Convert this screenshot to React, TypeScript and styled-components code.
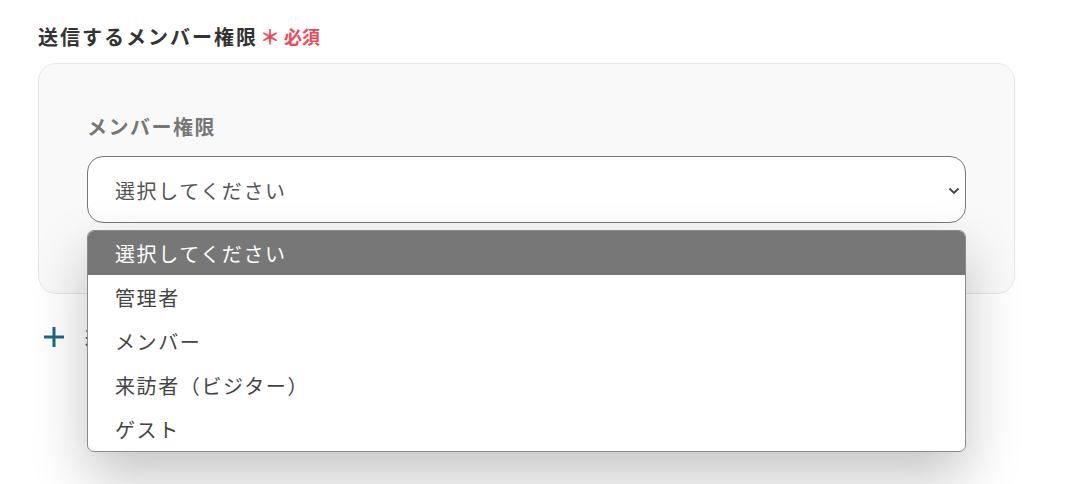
import styled, { createGlobalStyle } from "styled-components";

const GlobalStyle = createGlobalStyle`
    html, body {
        margin: 0;
        padding: 0;
        background: #ffffff;
        font-family: "Noto Sans CJK JP", "Noto Sans", sans-serif;
    }
`;

const options = ["選択してください", "管理者", "メンバー", "来訪者（ビジター）", "ゲスト"];

const App = () => {
    return (
        <Page>
            <GlobalStyle />
            <Title>
                送信するメンバー権限
                <Required>
                    <Asterisk>＊</Asterisk>必須
                </Required>
            </Title>
            <Card>
                <FieldLabel>メンバー権限</FieldLabel>
                <SelectWrap>
                    <SelectBox>
                        <span>選択してください</span>
                        <svg width="12" height="8" viewBox="0 0 12 8">
                            <path d="M1.5 1.5 L6 6 L10.5 1.5" fill="none" stroke="#444" strokeWidth="1.8" />
                        </svg>
                    </SelectBox>
                    <OptionList>
                        {options.map((option, index) => (
                            <OptionItem key={option} $active={index === 0}>
                                {option}
                            </OptionItem>
                        ))}
                    </OptionList>
                </SelectWrap>
            </Card>
            <AddRow>
                <svg width="22" height="22" viewBox="0 0 22 22">
                    <path d="M11 1 V21 M1 11 H21" stroke="#1b6a80" strokeWidth="3" />
                </svg>
                <AddText>追加</AddText>
            </AddRow>
        </Page>
    );
};

export default App;

// Styled-components
const Page = styled.div`
    padding: 22px 61px 0 38px;
    height: 484px;
    box-sizing: border-box;
    overflow: hidden;
`;

const Title = styled.div`
    display: flex;
    align-items: center;
    font-size: 20px;
    font-weight: 700;
    color: #333;
    letter-spacing: 2px;
    height: 28px;
`;

const Required = styled.span`
    display: flex;
    align-items: center;
    margin-left: 2px;
    color: #ea4a5a;
    font-size: 18px;
    letter-spacing: 0;
`;

const Asterisk = styled.span`
    font-size: 20px;
    margin-right: 4px;
`;

const Card = styled.div`
    margin-top: 13px;
    background: #f9f9f9;
    border: 1px solid #e6e6e6;
    border-radius: 18px;
    padding: 48px 48px 70px;
    height: 231px;
    box-sizing: border-box;
`;

const FieldLabel = styled.div`
    font-size: 20px;
    font-weight: 700;
    color: #777;
    letter-spacing: 1.5px;
    line-height: 30px;
    margin-bottom: 14px;
`;

const SelectWrap = styled.div`
    position: relative;
`;

const SelectBox = styled.div`
    display: flex;
    align-items: center;
    justify-content: space-between;
    height: 67px;
    box-sizing: border-box;
    padding: 2px 5px 0 27px;
    background: #fff;
    border: 1px solid #777;
    border-radius: 16px;
    font-size: 20px;
    color: #555;
    letter-spacing: 1.6px;
`;

const OptionList = styled.ul`
    position: absolute;
    top: 74px;
    left: 0;
    right: 0;
    margin: 0;
    padding: 0;
    list-style: none;
    background: #fff;
    border: 1px solid #8a8a8a;
    border-radius: 7px;
    overflow: hidden;
    box-shadow: 0 24px 56px rgba(0, 0, 0, 0.24);
    z-index: 2;
`;

const OptionItem = styled.li<{ $active?: boolean }>`
    height: 44px;
    display: flex;
    align-items: center;
    padding-left: 27px;
    font-size: 20px;
    letter-spacing: 1.6px;
    color: ${({ $active }) => ($active ? "#fff" : "#444")};
    background: ${({ $active }) => ($active ? "#777" : "transparent")};
`;

const AddRow = styled.div`
    display: flex;
    align-items: center;
    gap: 20px;
    margin-top: 30px;
    padding-left: 5px;
`;

const AddText = styled.span`
    font-size: 18px;
    color: #1b6a80;
    font-weight: 700;
`;
